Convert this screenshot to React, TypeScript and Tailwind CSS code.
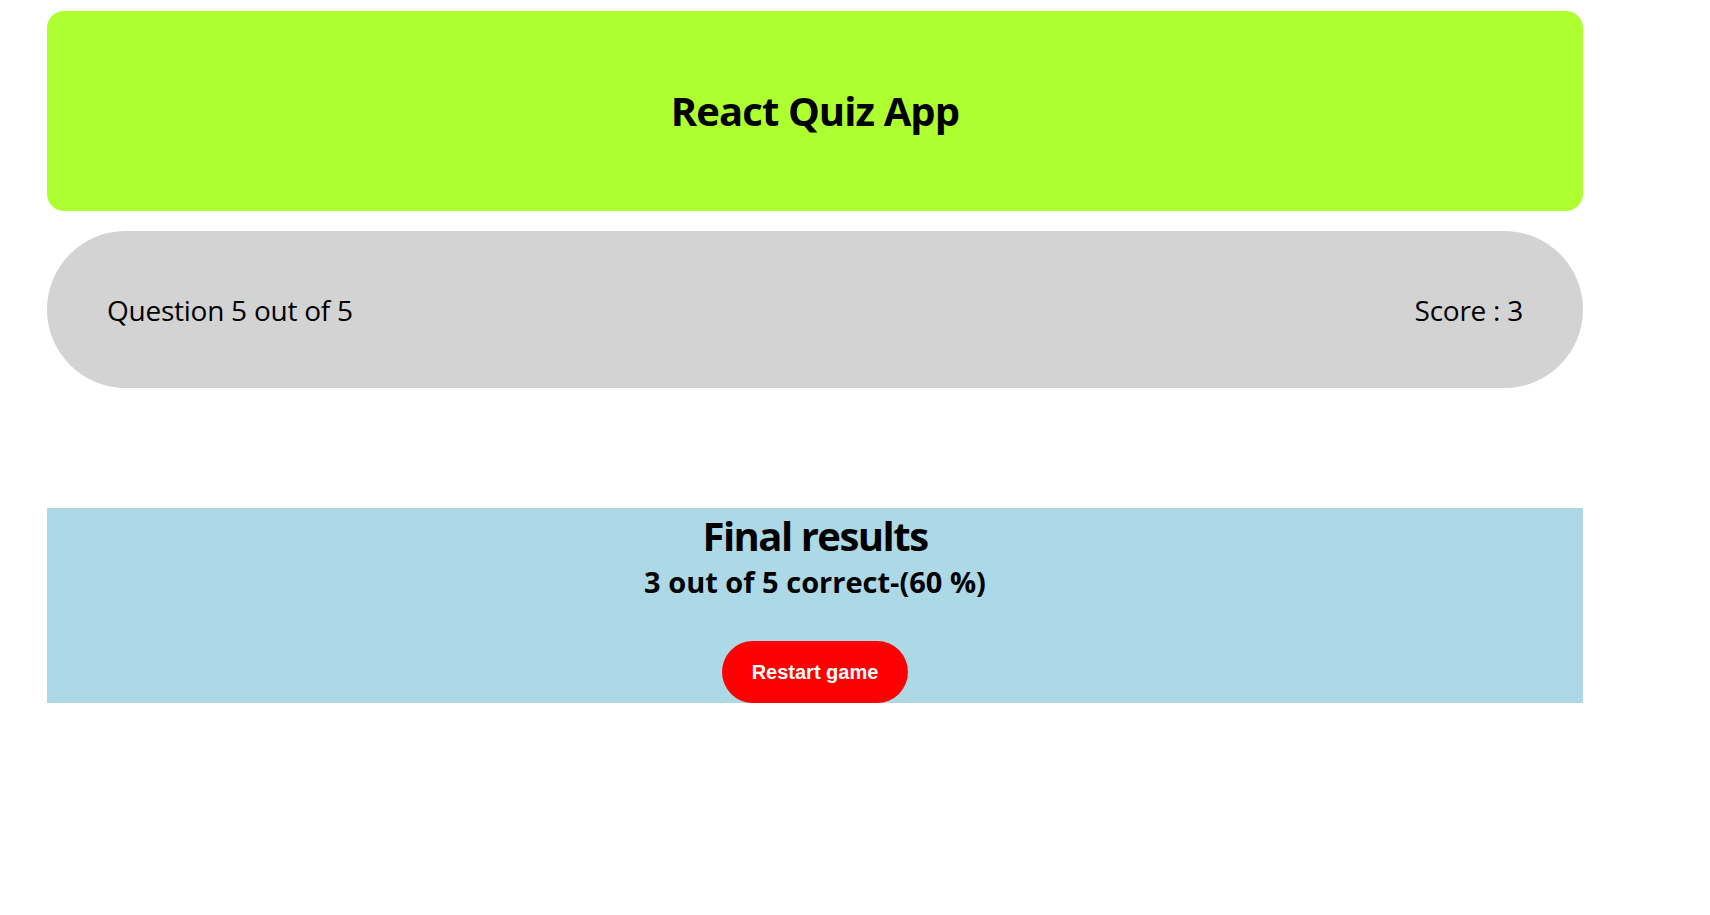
const QuizHeader: React.FC = () => {
  return (
    <header className="mt-[11px] h-[200px] rounded-[17px] bg-[#adff2f] flex items-center justify-center">
      <h1 className="text-[40px] leading-[48px] font-bold tracking-[-0.9px] text-black">
        React Quiz App
      </h1>
    </header>
  );
};

const ProgressBar: React.FC<{ current: number; total: number; score: number }> = ({
  current,
  total,
  score,
}) => {
  return (
    <div className="mt-[20px] h-[157px] rounded-full bg-[#d3d3d3] flex items-center justify-between px-[60px] text-[28px] tracking-[-0.25px] text-black">
      <span>
        Question {current} out of {total}
      </span>
      <span>Score : {score}</span>
    </div>
  );
};

const FinalResults: React.FC<{ score: number; total: number; onRestart: () => void }> = ({
  score,
  total,
  onRestart,
}) => {
  const percent = Math.round((score / total) * 100);
  return (
    <section className="mt-[120px] h-[195px] bg-[#add8e6] flex flex-col items-center pt-[4px] overflow-hidden">
      <h2 className="text-[40px] leading-[48px] font-bold tracking-[-1.5px] text-black">
        Final results
      </h2>
      <h3 className="mt-[5px] text-[29px] leading-[34px] font-bold text-black">
        {score} out of {total} correct-({percent} %)
      </h3>
      <button
        onClick={onRestart}
        className="mt-[42px] h-[62px] px-[30px] rounded-full bg-[#ff0000] text-white text-[20px] font-bold font-['Liberation_Sans',Arial,sans-serif]"
      >
        Restart game
      </button>
    </section>
  );
};

export default function App() {
  return (
    <div className="min-h-screen bg-white font-['Open_Sans',sans-serif]">
      <div className="ml-[47px] w-[1536px]">
        <QuizHeader />
        <ProgressBar current={5} total={5} score={3} />
        <FinalResults score={3} total={5} onRestart={() => {}} />
      </div>
    </div>
  );
}
